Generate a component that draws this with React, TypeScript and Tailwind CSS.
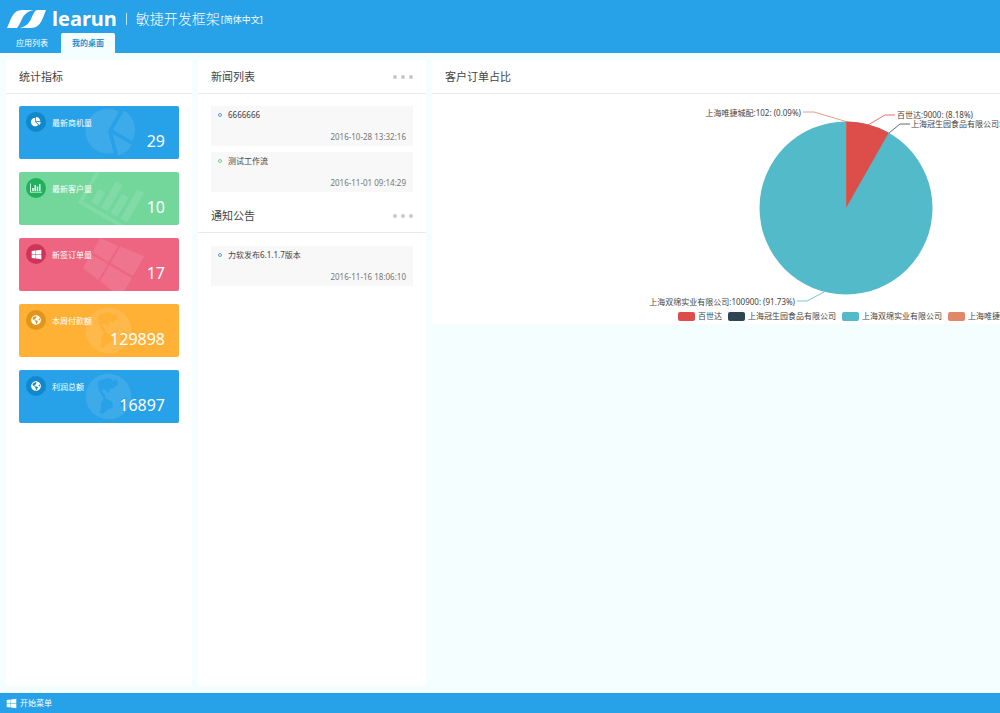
import type { ReactNode } from "react";
import { FaGlobeAmericas, FaWindows } from "react-icons/fa";

function PieIcon({ className }: { className?: string }) {
  return (
    <svg viewBox="0 0 1792 1792" fill="currentColor" className={className} aria-hidden="true">
      <path d="M768 890l546 546q-106 108-247.500 168t-298.500 60q-209 0-385.500-103t-279.500-279.500-103-385.500 103-385.500 279.500-279.500 385.500-103v762zm187 6h773q0 157-60 298.500t-168 247.500zm709-128h-768v-768q209 0 385.500 103t279.500 279.500 103 385.500z" />
    </svg>
  );
}

function BarsIcon({ className }: { className?: string }) {
  return (
    <svg viewBox="0 0 2048 1792" fill="currentColor" className={className} aria-hidden="true">
      <path d="M640 896v512h-256v-512h256zm384-512v1024h-256v-1024h256zm1024 1152v128h-2048v-1536h128v1408h1920zm-640-896v768h-256v-768h256zm384-384v1152h-256v-1152h256z" />
    </svg>
  );
}

type Stat = { label: string; value: string; card: string; badge: string; icon: ReactNode; mark: ReactNode };

const stats: Stat[] = [
  { label: "最新商机量", value: "29", card: "bg-[#27a1e8]", badge: "bg-[#1188cc]", icon: <PieIcon className="size-[10px]" />, mark: <PieIcon className="size-13 shrink-0 rotate-30" /> },
  { label: "最新客户量", value: "10", card: "bg-[#73d79c]", badge: "bg-[#1fb25a]", icon: <BarsIcon className="size-3" />, mark: <BarsIcon className="w-15 shrink-0 rotate-30" /> },
  { label: "新签订单量", value: "17", card: "bg-[#ed6581]", badge: "bg-[#cf3556]", icon: <FaWindows className="size-[11px]" />, mark: <FaWindows className="size-[54px] shrink-0 rotate-30" /> },
  { label: "本周付款额", value: "129898", card: "bg-[#ffb136]", badge: "bg-[#e1951b]", icon: <FaGlobeAmericas className="size-[10px]" />, mark: <FaGlobeAmericas className="size-[47px] shrink-0 rotate-30" /> },
  { label: "利润总额", value: "16897", card: "bg-[#27a1e8]", badge: "bg-[#1188cc]", icon: <FaGlobeAmericas className="size-[10px]" />, mark: <FaGlobeAmericas className="size-[47px] shrink-0 rotate-30" /> },
];

function PanelTitle({ children, more }: { children: string; more?: boolean }) {
  return (
    <div className="flex h-[34px] items-center justify-between border-b border-[#eaeaea] px-[13px]">
      <h2 className="text-[11px] text-[#444]">{children}</h2>
      {more && (
        <button type="button" aria-label={children + "更多"} className="flex gap-1">
          <i className="size-[4px] rounded-full bg-[#c8c8c8]" />
          <i className="size-[4px] rounded-full bg-[#c8c8c8]" />
          <i className="size-[4px] rounded-full bg-[#c8c8c8]" />
        </button>
      )}
    </div>
  );
}

function NewsItem({ title, time, ring }: { title: string; time: string; ring: string }) {
  return (
    <li className="flex h-10 flex-col justify-between bg-[#f8f8f8] px-[7px] pt-[3px] pb-[3px]">
      <a href="#" className="flex items-center gap-[6px] text-[#444]">
        <i className={"size-1 rounded-full border " + ring} />
        {title}
      </a>
      <time className="text-right text-[#777]">{time}</time>
    </li>
  );
}

const legend = [
  { name: "百世达", color: "bg-[#dd4d4a]" },
  { name: "上海冠生园食品有限公司", color: "bg-[#2f4554]" },
  { name: "上海双绵实业有限公司", color: "bg-[#52bac8]" },
  { name: "上海唯捷城配", color: "bg-[#e0876a]" },
];

function OrderChart() {
  return (
    <svg width="828" height="214" className="block max-w-none" fontSize="8" fill="#444" role="img" aria-label="客户订单占比">
      <circle cx="414" cy="114" r="86.500" fill="#52bac8" />
      <path d="M414 114V27.500A86.500 86.500 0 0 1 456.700 38.800Z" fill="#dd4d4a" />
      <path d="M414 114V27.500" stroke="#e0876a" strokeWidth=".6" />
      <g fill="none" strokeWidth=".8">
        <path d="M414 27.500L382 18H371" stroke="#e0876a" />
        <path d="M436 31L453 21H463" stroke="#dd4d4a" />
        <path d="M457 39L468 30H478" stroke="#2f4554" />
        <path d="M392 198L375 207H365" stroke="#52bac8" />
      </g>
      <text x="369" y="22" textAnchor="end">上海唯捷城配:102: (0.09%)</text>
      <text x="465" y="24">百世达:9000: (8.18%)</text>
      <text x="479" y="33">上海冠生园食品有限公司:1: (0%)</text>
      <text x="363" y="211" textAnchor="end">上海双绵实业有限公司:100900: (91.73%)</text>
    </svg>
  );
}

export default function App() {
  return (
    <div className="flex h-screen flex-col overflow-hidden bg-[#f5feff] font-['Noto_Sans','Noto_Sans_CJK_SC',sans-serif] text-[8px] leading-[12px]">
      <header className="flex flex-col bg-[#27a1e8] text-white">
        <div className="flex h-[33px] items-center px-[7px] pt-1">
          <svg viewBox="0 0 40 18" className="h-[18px] w-10" fill="currentColor" aria-hidden="true">
            <path d="M0 18C4 9 6 0 15 0H27C20 1 17 5 15 9C13 13 12 16 10 18Z" />
            <path d="M13 18C20 16 22 13 24 9C26 5 27 1 30 0H39C36 7 34 18 24 18Z" />
          </svg>
          <h1 className="ml-[5px] text-[20px] leading-6 font-bold">learun</h1>
          <span className="mx-[9px] h-3 w-px bg-white/70" />
          <span className="text-[14px] leading-5 font-light">敏捷开发框架</span>
          <span className="ml-px pt-[3px] text-[9px]">[简体中文]</span>
        </div>
        <nav className="flex h-5 pl-[3px]">
          <a href="#" className="px-[13px] pt-1">应用列表</a>
          <a href="#" className="rounded-t-[2px] bg-[#f5feff] px-[11px] pt-1 font-bold text-[#2a94d3]">我的桌面</a>
        </nav>
      </header>

      <main className="flex min-h-0 flex-1 items-start gap-[6px] pt-[7px] pb-[7px] pl-[6px]">
        <section className="flex w-[186px] shrink-0 flex-col self-stretch bg-white">
          <PanelTitle>统计指标</PanelTitle>
          <div className="flex flex-col gap-[13px] px-[13px] pt-3">
            {stats.map((s) => (
              <article key={s.label} className={"relative flex h-[53px] items-start overflow-hidden rounded-[2px] px-[7px] pt-[6px] text-white " + s.card}>
                <span className="absolute inset-y-0 left-[66px] flex items-center text-white/10">{s.mark}</span>
                <span className={"flex size-5 items-center justify-center rounded-full " + s.badge}>{s.icon}</span>
                <span className="relative ml-[6px] pt-[5px]">{s.label}</span>
                <span className="relative mr-[7px] ml-auto self-end pb-[6px] text-[16px] leading-6">{s.value}</span>
              </article>
            ))}
          </div>
        </section>

        <section className="flex w-[228px] shrink-0 flex-col self-stretch bg-white">
          <PanelTitle more>新闻列表</PanelTitle>
          <ul className="flex flex-col gap-[6px] px-[13px] pt-3 pb-[7px]">
            <NewsItem title="6666666" time="2016-10-28 13:32:16" ring="border-[#5b9be6]" />
            <NewsItem title="测试工作流" time="2016-11-01 09:14:29" ring="border-[#6bd596]" />
          </ul>
          <PanelTitle more>通知公告</PanelTitle>
          <ul className="flex flex-col px-[13px] pt-[13px]">
            <NewsItem title="力软发布6.1.1.7版本" time="2016-11-16 18:06:10" ring="border-[#5b9be6]" />
          </ul>
        </section>

        <section className="min-w-0 flex-1 overflow-hidden bg-white">
          <PanelTitle>客户订单占比</PanelTitle>
          <OrderChart />
          <ul className="flex h-4 items-center gap-[6px] pl-[246px] whitespace-nowrap text-[#444]">
            {legend.map((l) => (
              <li key={l.name} className="flex shrink-0 items-center gap-[3px]">
                <i className={"h-[9px] w-[17px] rounded-[2px] " + l.color} />
                {l.name}
              </li>
            ))}
          </ul>
        </section>
      </main>

      <footer className="flex h-5 items-center bg-[#27a1e8] px-[6px] text-white">
        <button type="button" className="flex items-center gap-[3px]">
          <FaWindows className="size-[11px]" />
          开始菜单
        </button>
      </footer>
    </div>
  );
}
